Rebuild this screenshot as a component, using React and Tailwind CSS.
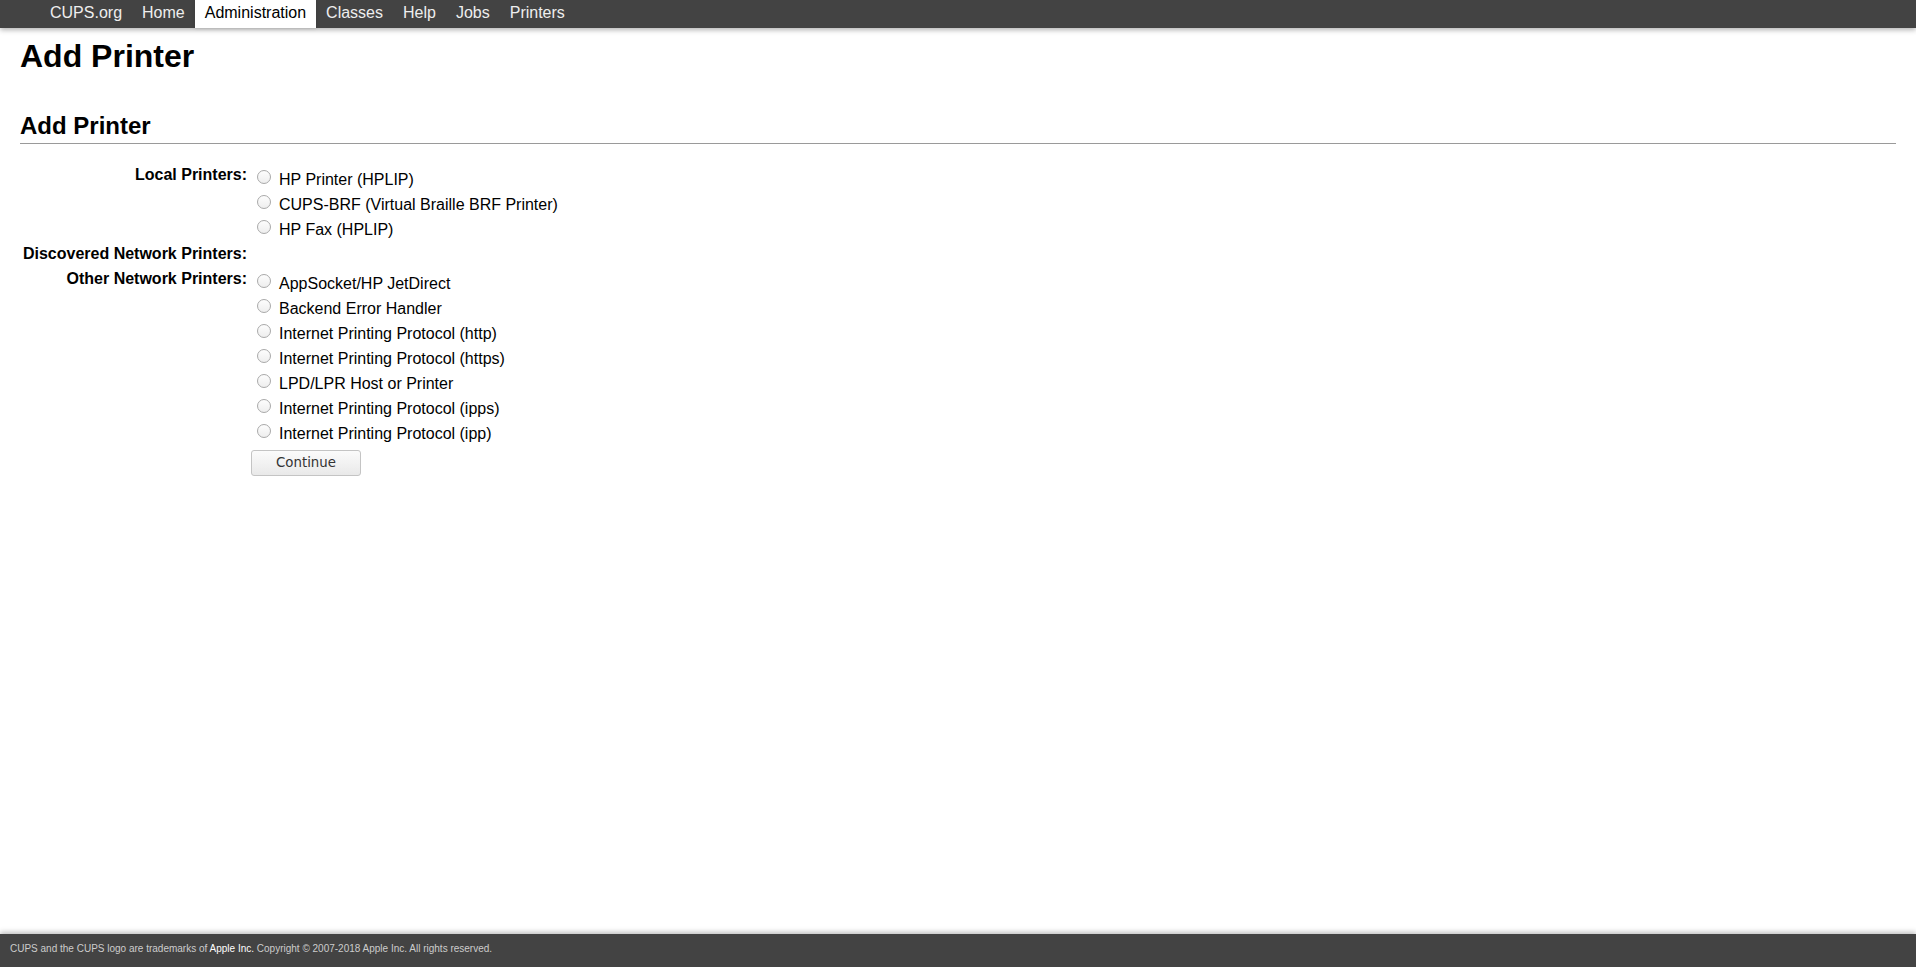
import React from 'react';

const navItems = ['CUPS.org', 'Home', 'Administration', 'Classes', 'Help', 'Jobs', 'Printers'];

const localPrinters = ['HP Printer (HPLIP)', 'CUPS-BRF (Virtual Braille BRF Printer)', 'HP Fax (HPLIP)'];

const otherPrinters = [
  'AppSocket/HP JetDirect',
  'Backend Error Handler',
  'Internet Printing Protocol (http)',
  'Internet Printing Protocol (https)',
  'LPD/LPR Host or Printer',
  'Internet Printing Protocol (ipps)',
  'Internet Printing Protocol (ipp)',
];

const Radio = ({ label }) => (
  <label className="flex items-start h-[25px] leading-[25px] cursor-default">
    <span className="mt-[3px] ml-[6px] w-[14px] h-[14px] rounded-full border border-[#a9a9a9] bg-gradient-to-b from-[#fdfdfd] to-[#eeeeee] shrink-0" />
    <span className="ml-[8px] whitespace-nowrap">{label}</span>
  </label>
);

const App = () => {
  return (
    <div
      className="flex flex-col h-screen bg-white text-black text-[16px]"
      style={{ fontFamily: '"Liberation Sans", Arial, Helvetica, sans-serif' }}
    >
      {/* Header */}
      <nav className="h-[28px] bg-[#434343] shadow-[0_2px_5px_rgba(0,0,0,0.3)] relative z-10 shrink-0">
        <ul className="flex h-full px-[40px]">
          {navItems.map((item) => {
            const isActive = item === 'Administration';
            return (
              <li
                key={item}
                className={`h-full px-[10px] leading-[25px] ${
                  isActive ? 'bg-white text-black shadow-[0_0_4px_rgba(0,0,0,0.15)]' : 'text-[#eeeeee]'
                }`}
              >
                {item}
              </li>
            );
          })}
        </ul>
      </nav>

      {/* Content */}
      <main className="flex-1 px-[20px]">
        <h1 className="mt-[10px] text-[32px] leading-[36px] font-bold">Add Printer</h1>
        <h2 className="mt-[38px] text-[24px] leading-[28px] font-bold">Add Printer</h2>
        <div className="mt-[3px] border-t border-[#9a9a9a]" />

        <div className="mt-[18px]">
          {/* Local printers */}
          <div className="flex">
            <div className="w-[231px] pr-[4px] text-right font-bold leading-[25px] shrink-0">Local Printers:</div>
            <div className="pt-[5px]">
              {localPrinters.map((p) => (
                <Radio key={p} label={p} />
              ))}
            </div>
          </div>

          {/* Discovered */}
          <div className="flex h-[24px]">
            <div className="w-[231px] pr-[4px] text-right font-bold leading-[24px] shrink-0 whitespace-nowrap">
              Discovered Network Printers:
            </div>
          </div>

          {/* Other */}
          <div className="flex">
            <div className="w-[231px] pr-[4px] text-right font-bold leading-[25px] shrink-0">Other Network Printers:</div>
            <div className="pt-[5px]">
              {otherPrinters.map((p) => (
                <Radio key={p} label={p} />
              ))}
              <button
                className="mt-[4px] h-[26px] px-[24px] rounded-[3px] border border-[#c4c4c4] bg-gradient-to-b from-[#fbfbfb] to-[#e9e9e9] text-[#333333] text-[13.33px]"
                style={{ fontFamily: '"DejaVu Sans", sans-serif' }}
              >
                Continue
              </button>
            </div>
          </div>
        </div>
      </main>

      {/* Footer */}
      <footer className="h-[33px] shrink-0 bg-[#434343] shadow-[0_-2px_5px_rgba(0,0,0,0.25)] flex items-center px-[10px] pb-[4px] text-[10px] text-[#cccccc]">
        <span>
          CUPS and the CUPS logo are trademarks of <span className="text-white">Apple Inc.</span> Copyright © 2007-2018
          Apple Inc. All rights reserved.
        </span>
      </footer>
    </div>
  );
};

export default App;
